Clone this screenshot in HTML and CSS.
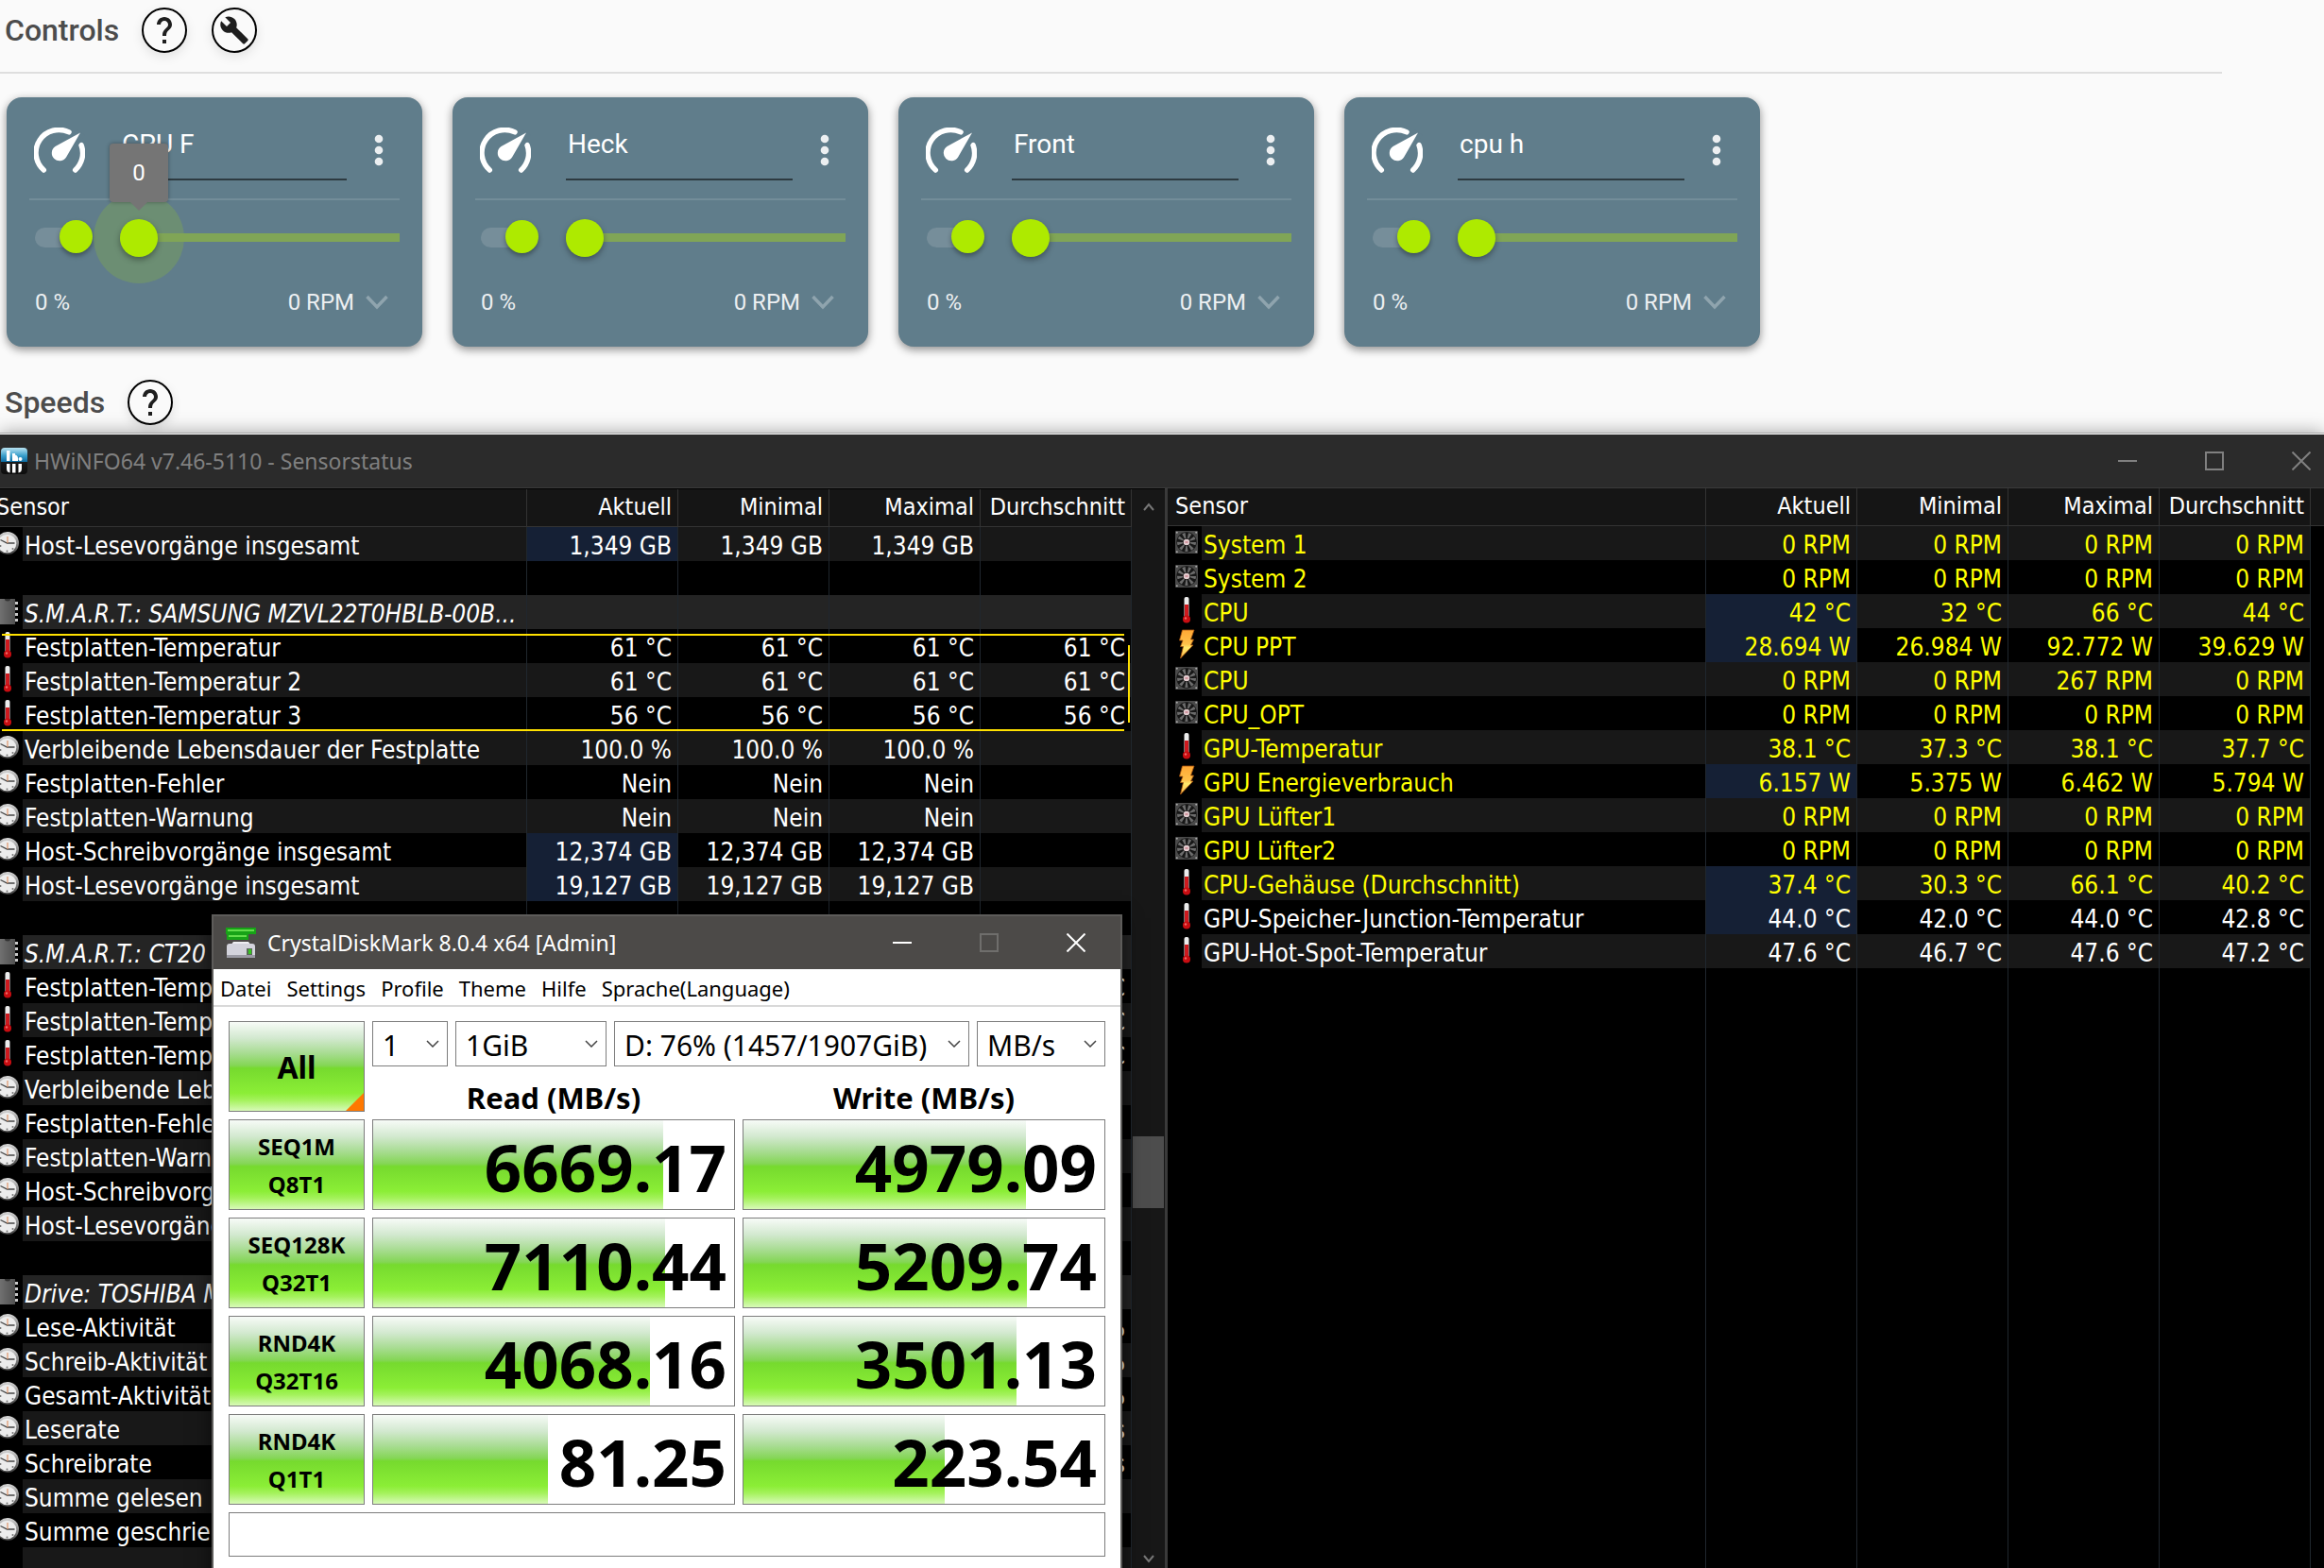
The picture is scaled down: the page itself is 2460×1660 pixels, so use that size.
FILE: index.html
```html
<!DOCTYPE html>
<html lang="de">
<head>
<meta charset="utf-8">
<title>Desktop</title>
<link rel="stylesheet" href="styles.css">
</head>
<body>
<svg class="defs" aria-hidden="true">
  <defs>
    <linearGradient id="g-bolt" x1="0" y1="0" x2="0" y2="1"><stop offset="0" stop-color="#ffa834"/><stop offset="0.5" stop-color="#ffc14a"/><stop offset="0.62" stop-color="#ffe96b"/><stop offset="1" stop-color="#ffb84a"/></linearGradient>
    <linearGradient id="g-rim" x1="0" y1="0" x2="0" y2="1"><stop offset="0" stop-color="#d8d8d8"/><stop offset="1" stop-color="#3c3c3c"/></linearGradient>
    <linearGradient id="g-chip" x1="0" y1="0" x2="1" y2="0"><stop offset="0" stop-color="#787878"/><stop offset="1" stop-color="#505050"/></linearGradient>
    <linearGradient id="g-blue" x1="0" y1="0" x2="0" y2="1"><stop offset="0" stop-color="#b9e3f2"/><stop offset="0.3" stop-color="#3a9fcb"/><stop offset="0.52" stop-color="#0f6ea3"/><stop offset="0.53" stop-color="#1c1c1c"/><stop offset="1" stop-color="#0c0c0c"/></linearGradient>
    <symbol id="gauge" viewBox="0 0 54 54">
      <g fill="none" stroke="#fff" stroke-width="5.5" stroke-linecap="round"><path d="M10.3 45A24.3 24.3 0 0 1 37 4.900"/><path d="M50 18.500A24.300 24.300 0 0 1 43.700 45"/></g>
      <path fill="#607d8b" d="M37 13l8-11 9 6-8 12z"/>
      <path fill="#fff" d="M49 5.500L34.200 31.200A8.300 8.300 0 1 1 22.500 20z"/>
    </symbol>
    <symbol id="help" viewBox="0 0 24 24"><path d="M13 19h-2v-2h2v2zm2.070-7.750l-.9.920C13.450 12.900 13 13.500 13 15h-2v-.5c0-1.100.450-2.100 1.170-2.830l1.240-1.260c.370-.360.590-.860.590-1.410 0-1.100-.9-2-2-2s-2 .9-2 2H8c0-2.210 1.790-4 4-4s4 1.790 4 4c0 .880-.360 1.680-.930 2.250z"/></symbol>
    <symbol id="wrench" viewBox="0 0 24 24"><path d="M22.700 19l-9.100-9.100c.9-2.300.4-5-1.500-6.900-2-2-5-2.400-7.400-1.300L9 6 6 9 1.600 4.700C.4 7.100.9 10.100 2.900 12.100c1.900 1.900 4.600 2.400 6.900 1.500l9.100 9.100c.4.4 1 .4 1.400 0l2.300-2.300c.5-.4.5-1.100.1-1.400z"/></symbol>
    <symbol id="dots" viewBox="0 0 12 36"><circle cx="6" cy="6" r="4.300"/><circle cx="6" cy="18" r="4.300"/><circle cx="6" cy="30" r="4.300"/></symbol>
    <symbol id="expand" viewBox="0 0 24 16"><path d="M1.500 2L12 13 22.500 2" fill="none" stroke="#8fa4ae" stroke-width="3.500"/></symbol>
    <symbol id="caret" viewBox="0 0 14 8"><path d="M1 1l6 6 6-6" fill="none" stroke="#444" stroke-width="1.500"/></symbol>
    <symbol id="clock" viewBox="0 0 24 24"><circle cx="12" cy="12" r="12" fill="url(#g-rim)"/><circle cx="11.500" cy="12.500" r="9.800" fill="#ececec"/><path d="M4.500 8.500l7 3.500h8" stroke="#444" stroke-width="1.300" fill="none"/><path d="M12 12V5" stroke="#e0956a" stroke-width="1.200"/><g fill="#777"><circle cx="11.500" cy="20.500" r="1"/><circle cx="4.500" cy="15" r="1"/><circle cx="17.500" cy="18" r="1"/></g></symbol>
    <symbol id="chip" viewBox="0 0 24 28"><path d="M0 1h20v27H0z" fill="url(#g-chip)"/><path d="M9 1a3 2.500 0 0 0 6 0z" fill="#333"/><g fill="#c9c9c9"><path d="M20 4h3v3h-3zM20 10h3v3h-3zM20 16h3v3h-3zM20 22h3v3h-3z"/></g></symbol>
    <symbol id="temp" viewBox="0 0 24 28"><rect x="9.500" y="0" width="5" height="22" rx="2" fill="#ececec"/><rect x="10" y="8" width="4" height="15" fill="#cf1a1f"/><circle cx="12" cy="23.500" r="4" fill="#c90d12"/><circle cx="11" cy="22.500" r="1.200" fill="#ef6a66"/></symbol>
    <symbol id="bolt" viewBox="0 0 24 32"><path fill="url(#g-bolt)" stroke="#a8540c" stroke-width=".8" d="M7.500 1H20l-3.500 10h3L16.500 17h2.500L5.500 31l3-12.500H5.500L8 12H4.500z"/></symbol>
    <symbol id="fan" viewBox="0 0 24 24"><rect width="24" height="24" rx="1" fill="#4a4a4a"/><circle cx="12" cy="12" r="10.700" fill="#161616"/><circle cx="12" cy="12" r="7" fill="none" stroke="#6c6c6c" stroke-width="6" stroke-dasharray="2.400 2.490"/><circle cx="12" cy="12" r="3.300" fill="#e3cdd0"/><path d="M10.500 12h3" stroke="#c05a6a"/><g fill="#aaa"><circle cx="1.800" cy="1.800" r="1"/><circle cx="22.200" cy="1.800" r="1"/><circle cx="1.800" cy="22.200" r="1"/><circle cx="22.200" cy="22.200" r="1"/></g></symbol>
    <symbol id="min" viewBox="0 0 20 20"><path d="M0 10h20" stroke="currentColor" stroke-width="2"/></symbol>
    <symbol id="max" viewBox="0 0 20 20"><path d="M1 1h18v18H1z" fill="none" stroke="currentColor" stroke-width="2"/></symbol>
    <symbol id="close" viewBox="0 0 20 20"><path d="M.5.500l19 19M19.500.500l-19 19" stroke="currentColor" stroke-width="2"/></symbol>
  </defs>
</svg>

<main class="fans">
  <header class="section-head ruled">
    <h2>Controls</h2>
    <button class="round" aria-label="Hilfe"><svg width="48" height="48"><use href="#help"/></svg></button>
    <button class="round" aria-label="Einrichten"><svg width="32" height="32"><use href="#wrench"/></svg></button>
  </header>
  <section class="cards">
    <article class="card">
      <div class="card-top"><svg class="gauge"><use href="#gauge"/></svg><input class="name" type="text" value="CPU F" aria-label="Name"><button class="icon-btn" aria-label="Menü"><svg width="12" height="36" fill="#eceff1"><use href="#dots"/></svg></button></div>
      <div class="card-mid"><input class="switch" type="checkbox" checked aria-label="Aktiv">
        <div class="slider active"><input type="range" min="0" max="100" value="0" aria-label="Drehzahl"><output class="bubble">0</output></div></div>
      <div class="card-bottom"><span>0 %</span><button class="rpm">0 RPM <svg width="24" height="16"><use href="#expand"/></svg></button></div>
    </article>
    <article class="card">
      <div class="card-top"><svg class="gauge"><use href="#gauge"/></svg><input class="name" type="text" value="Heck" aria-label="Name"><button class="icon-btn" aria-label="Menü"><svg width="12" height="36" fill="#eceff1"><use href="#dots"/></svg></button></div>
      <div class="card-mid"><input class="switch" type="checkbox" checked aria-label="Aktiv">
        <div class="slider"><input type="range" min="0" max="100" value="0" aria-label="Drehzahl"></div></div>
      <div class="card-bottom"><span>0 %</span><button class="rpm">0 RPM <svg width="24" height="16"><use href="#expand"/></svg></button></div>
    </article>
    <article class="card">
      <div class="card-top"><svg class="gauge"><use href="#gauge"/></svg><input class="name" type="text" value="Front" aria-label="Name"><button class="icon-btn" aria-label="Menü"><svg width="12" height="36" fill="#eceff1"><use href="#dots"/></svg></button></div>
      <div class="card-mid"><input class="switch" type="checkbox" checked aria-label="Aktiv">
        <div class="slider"><input type="range" min="0" max="100" value="0" aria-label="Drehzahl"></div></div>
      <div class="card-bottom"><span>0 %</span><button class="rpm">0 RPM <svg width="24" height="16"><use href="#expand"/></svg></button></div>
    </article>
    <article class="card">
      <div class="card-top"><svg class="gauge"><use href="#gauge"/></svg><input class="name" type="text" value="cpu h" aria-label="Name"><button class="icon-btn" aria-label="Menü"><svg width="12" height="36" fill="#eceff1"><use href="#dots"/></svg></button></div>
      <div class="card-mid"><input class="switch" type="checkbox" checked aria-label="Aktiv">
        <div class="slider"><input type="range" min="0" max="100" value="0" aria-label="Drehzahl"></div></div>
      <div class="card-bottom"><span>0 %</span><button class="rpm">0 RPM <svg width="24" height="16"><use href="#expand"/></svg></button></div>
    </article>
  </section>
  <header class="section-head">
    <h2>Speeds</h2>
    <button class="round" aria-label="Hilfe"><svg width="48" height="48"><use href="#help"/></svg></button>
  </header>
</main>

<section class="hw">
  <header class="hw-title">
    <svg width="28" height="28" viewBox="0 0 28 28"><rect width="28" height="28" rx="4" fill="url(#g-blue)"/><g fill="#fff"><path d="M6 3h3.500v11H6zM12 6h3v8h-3z"/><circle cx="20.500" cy="12" r="2"/><path d="M15 7.500a4 4 0 0 1 3 4V14h-3zM6 17h3.500v9.500Q6 26 6 22zM12 17h3.500v9.500H12zM18.500 17H22v5q0 4-3.500 4.500z"/></g></svg>
    <h1>HWiNFO64 v7.46-5110 - Sensorstatus</h1>
    <div class="hw-buttons">
      <button aria-label="Minimieren"><svg width="20" height="20"><use href="#min"/></svg></button>
      <button aria-label="Maximieren"><svg width="20" height="20"><use href="#max"/></svg></button>
      <button aria-label="Schließen"><svg width="20" height="20"><use href="#close"/></svg></button>
    </div>
  </header>
  <div class="panes">
    <div class="pane pane-left">
      <div class="table-wrap">
      <table>
        <colgroup><col><col class="num"><col class="num"><col class="num"><col class="num"></colgroup>
        <thead><tr><th>Sensor</th><th>Aktuell</th><th>Minimal</th><th>Maximal</th><th>Durchschnitt</th></tr></thead>
        <tbody>
          <tr><td><div class="s"><svg><use href="#clock"/></svg><span>Host-Lesevorgänge insgesamt</span></div></td><td class="hot">1,349 GB</td><td>1,349 GB</td><td>1,349 GB</td><td></td></tr>
          <tr><td></td><td></td><td></td><td></td><td></td></tr>
          <tr class="group"><td><div class="s"><svg><use href="#chip"/></svg><span>S.M.A.R.T.: SAMSUNG MZVL22T0HBLB-00B...</span></div></td><td></td><td></td><td></td><td></td></tr>
          <tr><td><div class="s"><svg><use href="#temp"/></svg><span>Festplatten-Temperatur</span></div></td><td>61 °C</td><td>61 °C</td><td>61 °C</td><td>61 °C</td></tr>
          <tr><td><div class="s"><svg><use href="#temp"/></svg><span>Festplatten-Temperatur 2</span></div></td><td>61 °C</td><td>61 °C</td><td>61 °C</td><td>61 °C</td></tr>
          <tr><td><div class="s"><svg><use href="#temp"/></svg><span>Festplatten-Temperatur 3</span></div></td><td>56 °C</td><td>56 °C</td><td>56 °C</td><td>56 °C</td></tr>
          <tr><td><div class="s"><svg><use href="#clock"/></svg><span>Verbleibende Lebensdauer der Festplatte</span></div></td><td>100.0 %</td><td>100.0 %</td><td>100.0 %</td><td></td></tr>
          <tr><td><div class="s"><svg><use href="#clock"/></svg><span>Festplatten-Fehler</span></div></td><td>Nein</td><td>Nein</td><td>Nein</td><td></td></tr>
          <tr><td><div class="s"><svg><use href="#clock"/></svg><span>Festplatten-Warnung</span></div></td><td>Nein</td><td>Nein</td><td>Nein</td><td></td></tr>
          <tr><td><div class="s"><svg><use href="#clock"/></svg><span>Host-Schreibvorgänge insgesamt</span></div></td><td class="hot">12,374 GB</td><td>12,374 GB</td><td>12,374 GB</td><td></td></tr>
          <tr><td><div class="s"><svg><use href="#clock"/></svg><span>Host-Lesevorgänge insgesamt</span></div></td><td class="hot">19,127 GB</td><td>19,127 GB</td><td>19,127 GB</td><td></td></tr>
          <tr><td></td><td></td><td></td><td></td><td></td></tr>
          <tr class="group"><td><div class="s"><svg><use href="#chip"/></svg><span>S.M.A.R.T.: CT20</span></div></td><td></td><td></td><td></td><td></td></tr>
          <tr><td><div class="s"><svg><use href="#temp"/></svg><span>Festplatten-Temperatur</span></div></td><td></td><td></td><td></td><td>°C</td></tr>
          <tr><td><div class="s"><svg><use href="#temp"/></svg><span>Festplatten-Temperatur</span></div></td><td></td><td></td><td></td><td>°C</td></tr>
          <tr><td><div class="s"><svg><use href="#temp"/></svg><span>Festplatten-Temperatur</span></div></td><td></td><td></td><td></td><td>°C</td></tr>
          <tr><td><div class="s"><svg><use href="#clock"/></svg><span>Verbleibende Lebensdauer</span></div></td><td></td><td></td><td></td><td></td></tr>
          <tr><td><div class="s"><svg><use href="#clock"/></svg><span>Festplatten-Fehler</span></div></td><td></td><td></td><td></td><td></td></tr>
          <tr><td><div class="s"><svg><use href="#clock"/></svg><span>Festplatten-Warnung</span></div></td><td></td><td></td><td></td><td></td></tr>
          <tr><td><div class="s"><svg><use href="#clock"/></svg><span>Host-Schreibvorgänge</span></div></td><td></td><td></td><td></td><td></td></tr>
          <tr><td><div class="s"><svg><use href="#clock"/></svg><span>Host-Lesevorgänge</span></div></td><td></td><td></td><td></td><td></td></tr>
          <tr><td></td><td></td><td></td><td></td><td></td></tr>
          <tr class="group"><td><div class="s"><svg><use href="#chip"/></svg><span>Drive: TOSHIBA M</span></div></td><td></td><td></td><td></td><td></td></tr>
          <tr><td><div class="s"><svg><use href="#clock"/></svg><span>Lese-Aktivität</span></div></td><td></td><td></td><td></td><td>%</td></tr>
          <tr><td><div class="s"><svg><use href="#clock"/></svg><span>Schreib-Aktivität</span></div></td><td></td><td></td><td></td><td>%</td></tr>
          <tr><td><div class="s"><svg><use href="#clock"/></svg><span>Gesamt-Aktivität</span></div></td><td></td><td></td><td></td><td>%</td></tr>
          <tr><td><div class="s"><svg><use href="#clock"/></svg><span>Leserate</span></div></td><td></td><td></td><td></td><td>MB/s</td></tr>
          <tr><td><div class="s"><svg><use href="#clock"/></svg><span>Schreibrate</span></div></td><td></td><td></td><td></td><td>MB/s</td></tr>
          <tr><td><div class="s"><svg><use href="#clock"/></svg><span>Summe gelesen</span></div></td><td></td><td></td><td></td><td></td></tr>
          <tr><td><div class="s"><svg><use href="#clock"/></svg><span>Summe geschrieben</span></div></td><td></td><td></td><td></td><td></td></tr>
          <tr><td><div class="s"></div></td><td></td><td></td><td></td><td></td></tr>
        </tbody>
      </table>
      <div class="mark"></div>
      </div>
      <div class="scrollbar">
        <svg width="12" height="10" viewBox="0 0 12 10"><path d="M1 8l5-6 5 6" fill="none" stroke="#777" stroke-width="2"/></svg>
        <div class="thumb"></div>
        <svg width="12" height="10" viewBox="0 0 12 10"><path d="M1 2l5 6 5-6" fill="none" stroke="#777" stroke-width="2"/></svg>
      </div>
    </div>
    <div class="pane pane-right">
      <table class="yellow">
        <colgroup><col><col class="num"><col class="num"><col class="num"><col class="num"><col class="rest"></colgroup>
        <thead><tr><th>Sensor</th><th>Aktuell</th><th>Minimal</th><th>Maximal</th><th>Durchschnitt</th><th></th></tr></thead>
        <tbody>
          <tr><td><div class="s"><svg><use href="#fan"/></svg><span>System 1</span></div></td><td>0 RPM</td><td>0 RPM</td><td>0 RPM</td><td>0 RPM</td><td></td></tr>
          <tr><td><div class="s"><svg><use href="#fan"/></svg><span>System 2</span></div></td><td>0 RPM</td><td>0 RPM</td><td>0 RPM</td><td>0 RPM</td><td></td></tr>
          <tr><td><div class="s"><svg><use href="#temp"/></svg><span>CPU</span></div></td><td class="hot">42 °C</td><td>32 °C</td><td>66 °C</td><td>44 °C</td><td></td></tr>
          <tr><td><div class="s"><svg class="tall"><use href="#bolt"/></svg><span>CPU PPT</span></div></td><td class="hot">28.694 W</td><td>26.984 W</td><td>92.772 W</td><td>39.629 W</td><td></td></tr>
          <tr><td><div class="s"><svg><use href="#fan"/></svg><span>CPU</span></div></td><td>0 RPM</td><td>0 RPM</td><td>267 RPM</td><td>0 RPM</td><td></td></tr>
          <tr><td><div class="s"><svg><use href="#fan"/></svg><span>CPU_OPT</span></div></td><td>0 RPM</td><td>0 RPM</td><td>0 RPM</td><td>0 RPM</td><td></td></tr>
          <tr><td><div class="s"><svg><use href="#temp"/></svg><span>GPU-Temperatur</span></div></td><td>38.1 °C</td><td>37.3 °C</td><td>38.1 °C</td><td>37.7 °C</td><td></td></tr>
          <tr><td><div class="s"><svg class="tall"><use href="#bolt"/></svg><span>GPU Energieverbrauch</span></div></td><td class="hot">6.157 W</td><td>5.375 W</td><td>6.462 W</td><td>5.794 W</td><td></td></tr>
          <tr><td><div class="s"><svg><use href="#fan"/></svg><span>GPU Lüfter1</span></div></td><td>0 RPM</td><td>0 RPM</td><td>0 RPM</td><td>0 RPM</td><td></td></tr>
          <tr><td><div class="s"><svg><use href="#fan"/></svg><span>GPU Lüfter2</span></div></td><td>0 RPM</td><td>0 RPM</td><td>0 RPM</td><td>0 RPM</td><td></td></tr>
          <tr><td><div class="s"><svg><use href="#temp"/></svg><span>CPU-Gehäuse (Durchschnitt)</span></div></td><td class="hot">37.4 °C</td><td>30.3 °C</td><td>66.1 °C</td><td>40.2 °C</td><td></td></tr>
          <tr class="white"><td><div class="s"><svg><use href="#temp"/></svg><span>GPU-Speicher-Junction-Temperatur</span></div></td><td class="hot">44.0 °C</td><td>42.0 °C</td><td>44.0 °C</td><td>42.8 °C</td><td></td></tr>
          <tr class="white"><td><div class="s"><svg><use href="#temp"/></svg><span>GPU-Hot-Spot-Temperatur</span></div></td><td>47.6 °C</td><td>46.7 °C</td><td>47.6 °C</td><td>47.2 °C</td><td></td></tr>
          <tr class="filler"><td></td><td></td><td></td><td></td><td></td><td></td></tr>
        </tbody>
      </table>
    </div>
  </div>
</section>

<section class="cdm">
  <header class="cdm-title">
    <svg width="32" height="32" viewBox="0 0 32 32"><path d="M5 19l3-4h16l3 4z" fill="#eeeef2"/><path d="M1 20q0-3 3-3h24q3 0 3 3v11q0 1-1 1H2q-1 0-1-1z" fill="#d3d3dc"/><path d="M1 29h30v2q0 1-1 1H2q-1 0-1-1z" fill="#9a9aa4"/><path d="M22 22h6v7h-6z" fill="#5a6a5a"/><path d="M24 23h3v5h-3z" fill="#35c51f"/><path d="M0 0h32v7H0z" fill="#17a317"/><path d="M2 2h28v2H2z" fill="#63dd4c"/><path d="M1 7h23v6H1z" fill="#17a317"/><path d="M3 8h19v2H3z" fill="#63dd4c"/></svg>
    <h1>CrystalDiskMark 8.0.4 x64 [Admin]</h1>
    <div class="cdm-buttons">
      <button aria-label="Minimieren"><svg width="20" height="20"><use href="#min"/></svg></button>
      <button aria-label="Maximieren" disabled><svg width="20" height="20"><use href="#max"/></svg></button>
      <button aria-label="Schließen"><svg width="20" height="20"><use href="#close"/></svg></button>
    </div>
  </header>
  <nav class="menu"><button>Datei</button><button>Settings</button><button>Profile</button><button>Theme</button><button>Hilfe</button><button>Sprache(Language)</button></nav>
  <div class="bench">
    <button class="green all">All</button>
    <div class="picks">
      <label class="pick p-count"><select aria-label="Durchläufe"><option>1</option></select><svg><use href="#caret"/></svg></label>
      <label class="pick p-size"><select aria-label="Größe"><option>1GiB</option></select><svg><use href="#caret"/></svg></label>
      <label class="pick p-drive"><select aria-label="Laufwerk"><option>D: 76% (1457/1907GiB)</option></select><svg><use href="#caret"/></svg></label>
      <label class="pick p-unit"><select aria-label="Einheit"><option>MB/s</option></select><svg><use href="#caret"/></svg></label>
    </div>
    <div class="col-head">Read (MB/s)</div>
    <div class="col-head">Write (MB/s)</div>
    <button class="green">SEQ1M<br>Q8T1</button>
    <div class="score"><div class="fill" style="width:80.3%"></div><output>6669.17</output></div>
    <div class="score"><div class="fill" style="width:78.3%"></div><output>4979.09</output></div>
    <button class="green">SEQ128K<br>Q32T1</button>
    <div class="score"><div class="fill" style="width:80.8%"></div><output>7110.44</output></div>
    <div class="score"><div class="fill" style="width:78.5%"></div><output>5209.74</output></div>
    <button class="green">RND4K<br>Q32T16</button>
    <div class="score"><div class="fill" style="width:76.8%"></div><output>4068.16</output></div>
    <div class="score"><div class="fill" style="width:75.6%"></div><output>3501.13</output></div>
    <button class="green">RND4K<br>Q1T1</button>
    <div class="score"><div class="fill" style="width:48.4%"></div><output>81.25</output></div>
    <div class="score"><div class="fill" style="width:55.7%"></div><output>223.54</output></div>
    <input class="comment" type="text" aria-label="Kommentar">
  </div>
</section>
</body>
</html>
```
FILE: styles.css
```css
* { box-sizing: border-box; }
body {
  margin: 0;
  height: 100vh;
  overflow: hidden;
  position: relative;
  display: flex;
  flex-direction: column;
  background: #fafafa;
  font-family: Roboto, "Liberation Sans", sans-serif;
}
button { border: 0; padding: 0; background: none; color: inherit; font: inherit; }
h1, h2 { margin: 0; font-weight: 400; }
svg { display: block; flex: none; }
.defs { position: absolute; width: 0; height: 0; }

/* fan control page */
.section-head { display: flex; align-items: center; padding: 8px 5px; }
.section-head.ruled { width: 2352px; max-width: 96%; padding-bottom: 20px; border-bottom: 2px solid #dedede; }
.section-head h2 { font-size: 32px; line-height: 48px; font-weight: 500; color: #4c4c4c; margin-right: 24px; }
.round {
  width: 48px; height: 48px;
  display: grid; place-items: center;
  border: 2px solid #000; border-radius: 50%;
  margin-right: 26px;
  fill: #1e1e1e;
  box-shadow: 0 4px 12px rgba(0, 0, 0, .1);
}
.round svg { margin: -2px; }
.cards { display: flex; gap: 32px; padding: 25px 7px 27px; }
.card {
  width: 440px; height: 264px;
  padding: 0 24px;
  border-radius: 16px;
  background: #607d8b;
  box-shadow: 0 3px 10px rgba(0, 0, 0, .45);
  color: #eceff1;
}
.card-top { display: flex; height: 109px; padding: 22px 16px 0 5px; border-bottom: 2px solid #738d99; }
.gauge { width: 54px; height: 54px; margin: 10px 37px 0 0; }
.name {
  width: 240px; height: 66px;
  border: 0; border-bottom: 2px solid #2d3a40;
  padding: 0 0 10px 2px;
  background: none; outline: 0;
  color: #fff; font: 28px Roboto, sans-serif;
}
.icon-btn { margin: 16px 0 0 auto; height: 36px; }
.card-mid { display: flex; align-items: center; height: 79px; padding-left: 6px; }
.switch {
  appearance: none; position: relative;
  width: 54px; height: 21px; margin: 0 36px 0 0;
  border-radius: 11px; background: #768e9a;
}
.switch::before {
  content: ""; position: absolute; right: -7px; top: -8px;
  width: 35px; height: 35px; border-radius: 50%;
  background: #aeea00; box-shadow: 0 3px 5px rgba(0, 0, 0, .35);
}
.slider { position: relative; flex: 1; height: 40px; }
.slider input { appearance: none; position: relative; display: block; width: 100%; height: 40px; margin: 0; background: none; }
.slider input::-webkit-slider-runnable-track {
  height: 40px;
  background: linear-gradient(#80a556, #80a556) center / 100% 9px no-repeat;
}
.slider input::-webkit-slider-thumb {
  appearance: none; width: 40px; height: 40px; border-radius: 50%;
  background: #aeea00; box-shadow: 0 3px 6px rgba(0, 0, 0, .35);
}
.slider.active::before {
  content: ""; position: absolute; left: -28px; top: -28px;
  width: 96px; height: 96px; border-radius: 50%; background: rgba(128, 168, 80, .4);
}
.bubble {
  position: absolute; left: -11px; top: -80px;
  width: 62px; height: 62px; border-radius: 4px;
  background: #757575; color: #fff;
  font-size: 24px; line-height: 62px; text-align: center;
  box-shadow: 0 0 4px rgba(0, 0, 0, .35);
}
.bubble::after {
  content: ""; position: absolute; left: 21px; top: 61px;
  border: 10px solid transparent; border-top-color: #757575; border-bottom: 0;
}
.card-bottom { display: flex; justify-content: space-between; align-items: center; height: 57px; padding: 0 12px 0 6px; font-size: 24px; }
.rpm { display: flex; align-items: center; gap: 12px; }

/* sensor window */
.hw {
  flex: 1; min-height: 0;
  display: flex; flex-direction: column;
  background: #000; color: #fff;
  border-top: 1px solid #a4a4a4;
  box-shadow: 0 0 18px rgba(0, 0, 0, .35);
  font-family: "Noto Sans", "Open Sans", sans-serif;
}
.hw-title { display: flex; align-items: center; height: 58px; border-top: 1px solid #fff; border-bottom: 1px solid #3a3a3a; background: #2b2b2b; color: #808080; padding: 0 14px 0 1px; }
.hw-title h1 { font-size: 23px; margin-left: 7px; }
.hw-buttons { display: flex; gap: 72px; margin-left: auto; }
.panes { flex: 1; min-height: 0; display: grid; grid-template-columns: minmax(0, 1236fr) minmax(0, 1224fr); font-family: "DejaVu Sans Condensed", "Noto Sans", sans-serif; }
.pane { min-height: 0; overflow: hidden; }
.pane-left { display: flex; padding-top: 1px; border-right: 3px solid #3a3a3a; }
.table-wrap { flex: 1; position: relative; margin-left: -12px; }
table { width: 100%; table-layout: fixed; border-collapse: separate; border-spacing: 0; font-size: 26px; line-height: 32px; white-space: nowrap; }
.pane-right table { height: 100%; }
.num { width: 160px; }
.rest { width: 14px; }
th, td { height: 36px; padding: 3px 6px 0; text-align: right; font-weight: 400; border-right: 1px solid #20272e; overflow: hidden; }
th { height: 40px; padding: 0 6px 1px; background: #151515; border-right-color: #333; border-bottom: 1px solid #333; font-size: 25px; }
th:first-child { text-align: left; padding-left: 8px; }
td:first-child { padding: 0; text-align: left; }
th:last-child { padding-left: 0; }
tbody tr:nth-child(odd) td:not(:first-child), tbody tr:nth-child(odd) .s { background-color: #181818; }
.s { display: flex; align-items: center; height: 36px; margin-left: 36px; padding-left: 2px; }
.s svg { width: 24px; height: 28px; margin: -2px 6px 0 -30px; }
.s svg.tall { height: 32px; }
.s span { padding-top: 3px; }
tbody tr.group td:not(:first-child), tbody tr.group .s { background-color: #242424; }
.group span { font-style: italic; }
tbody tr td.hot:not(:first-child) { background-color: #152035; }
.yellow tbody { color: #ff0; }
.yellow tbody .white { color: #fff; }
.filler td { height: auto; }
tbody tr td:nth-child(6), tbody tr.filler td:not(:first-child), tbody tr:nth-child(odd) td:nth-child(6) { background: #000; }
.yellow td:last-child, .yellow th:last-child { border-right: 0; }

/* highlighter strokes round the drive temperatures */
.mark { position: absolute; left: 14px; right: 0; top: 153px; height: 103px; border-top: 2px solid #ffe100; border-bottom: 2px solid #ffe100; margin-right: 8px; }
.mark::after { content: ""; position: absolute; right: -6px; top: 10px; bottom: 7px; width: 2px; background: #ffe100; }

.scrollbar { width: 35px; background: #171717; display: flex; flex-direction: column; align-items: center; padding: 14px 0 5px; }
.thumb { width: 33px; height: 76px; margin: 661px 0 auto; background: #4d4d4d; }

/* benchmark window, floats over the sensor window */
.cdm {
  position: absolute; left: 224px; top: 968px; width: 964px;
  border: 2px solid #5d5c5a; border-bottom: 0;
  background: #fff; color: #000;
  font-family: "Noto Sans", "Open Sans", sans-serif;
  box-shadow: 0 4px 20px rgba(0, 0, 0, .6);
}
.cdm-title { display: flex; align-items: center; height: 56px; padding: 0 37px 0 13px; background: #4c4a48; color: #fff; }
.cdm-title h1 { font-size: 23px; margin-left: 12px; }
.cdm-buttons { display: flex; gap: 72px; margin-left: auto; }
.cdm-buttons button:disabled { color: #6f6e6c; }
.menu { display: flex; gap: 16px; height: 40px; padding: 0 7px; border-bottom: 2px solid #d9d9d9; font-size: 22px; line-height: 40px; }
.bench { display: grid; grid-template-columns: 144px 1fr 1fr; gap: 8px; padding: 15px 16px 40px; }
.green {
  height: 96px; border: 1px solid #7d7d7d; padding-top: 2px;
  font-size: 24px; line-height: 40px; font-weight: 700;
}
.green, .fill { background: linear-gradient(#f7fbf7, #d3e9d0 18%, #a8dc92 35%, #84d655 49%, #76da2e 52%, #8bee36 80%, #a4f25c 88%, #d8fab8); }
.all { grid-row: span 2; font-size: 32px; position: relative; }
.all::after { content: ""; position: absolute; right: 0; bottom: 0; border-left: 19px solid transparent; border-bottom: 19px solid #ff7800; }
.picks { grid-column: span 2; display: flex; gap: 8px; height: 48px; }
.pick { display: flex; position: relative; }
.p-count { flex: 80; } .p-size { flex: 160; } .p-drive { flex: 376; } .p-unit { flex: 136; }
.pick select { appearance: none; width: 100%; border: 1px solid #7d7d7d; border-radius: 0; background: #fff; padding: 3px 0 0 10px; color: #000; font: 30px "Noto Sans", sans-serif; }
.pick svg { position: absolute; right: 9px; top: 20px; width: 14px; height: 8px; }
.col-head { height: 40px; padding-top: 5px; text-align: center; font-size: 31px; line-height: 40px; font-weight: 700; }
.score { position: relative; height: 96px; border: 1px solid #7d7d7d; }
.fill { height: 100%; }
.score output { position: absolute; right: 8px; top: 0; font-size: 69px; line-height: 98px; font-weight: 700; }
.comment { grid-column: span 3; height: 47px; border: 1px solid #7d7d7d; background: #fff; }
```
